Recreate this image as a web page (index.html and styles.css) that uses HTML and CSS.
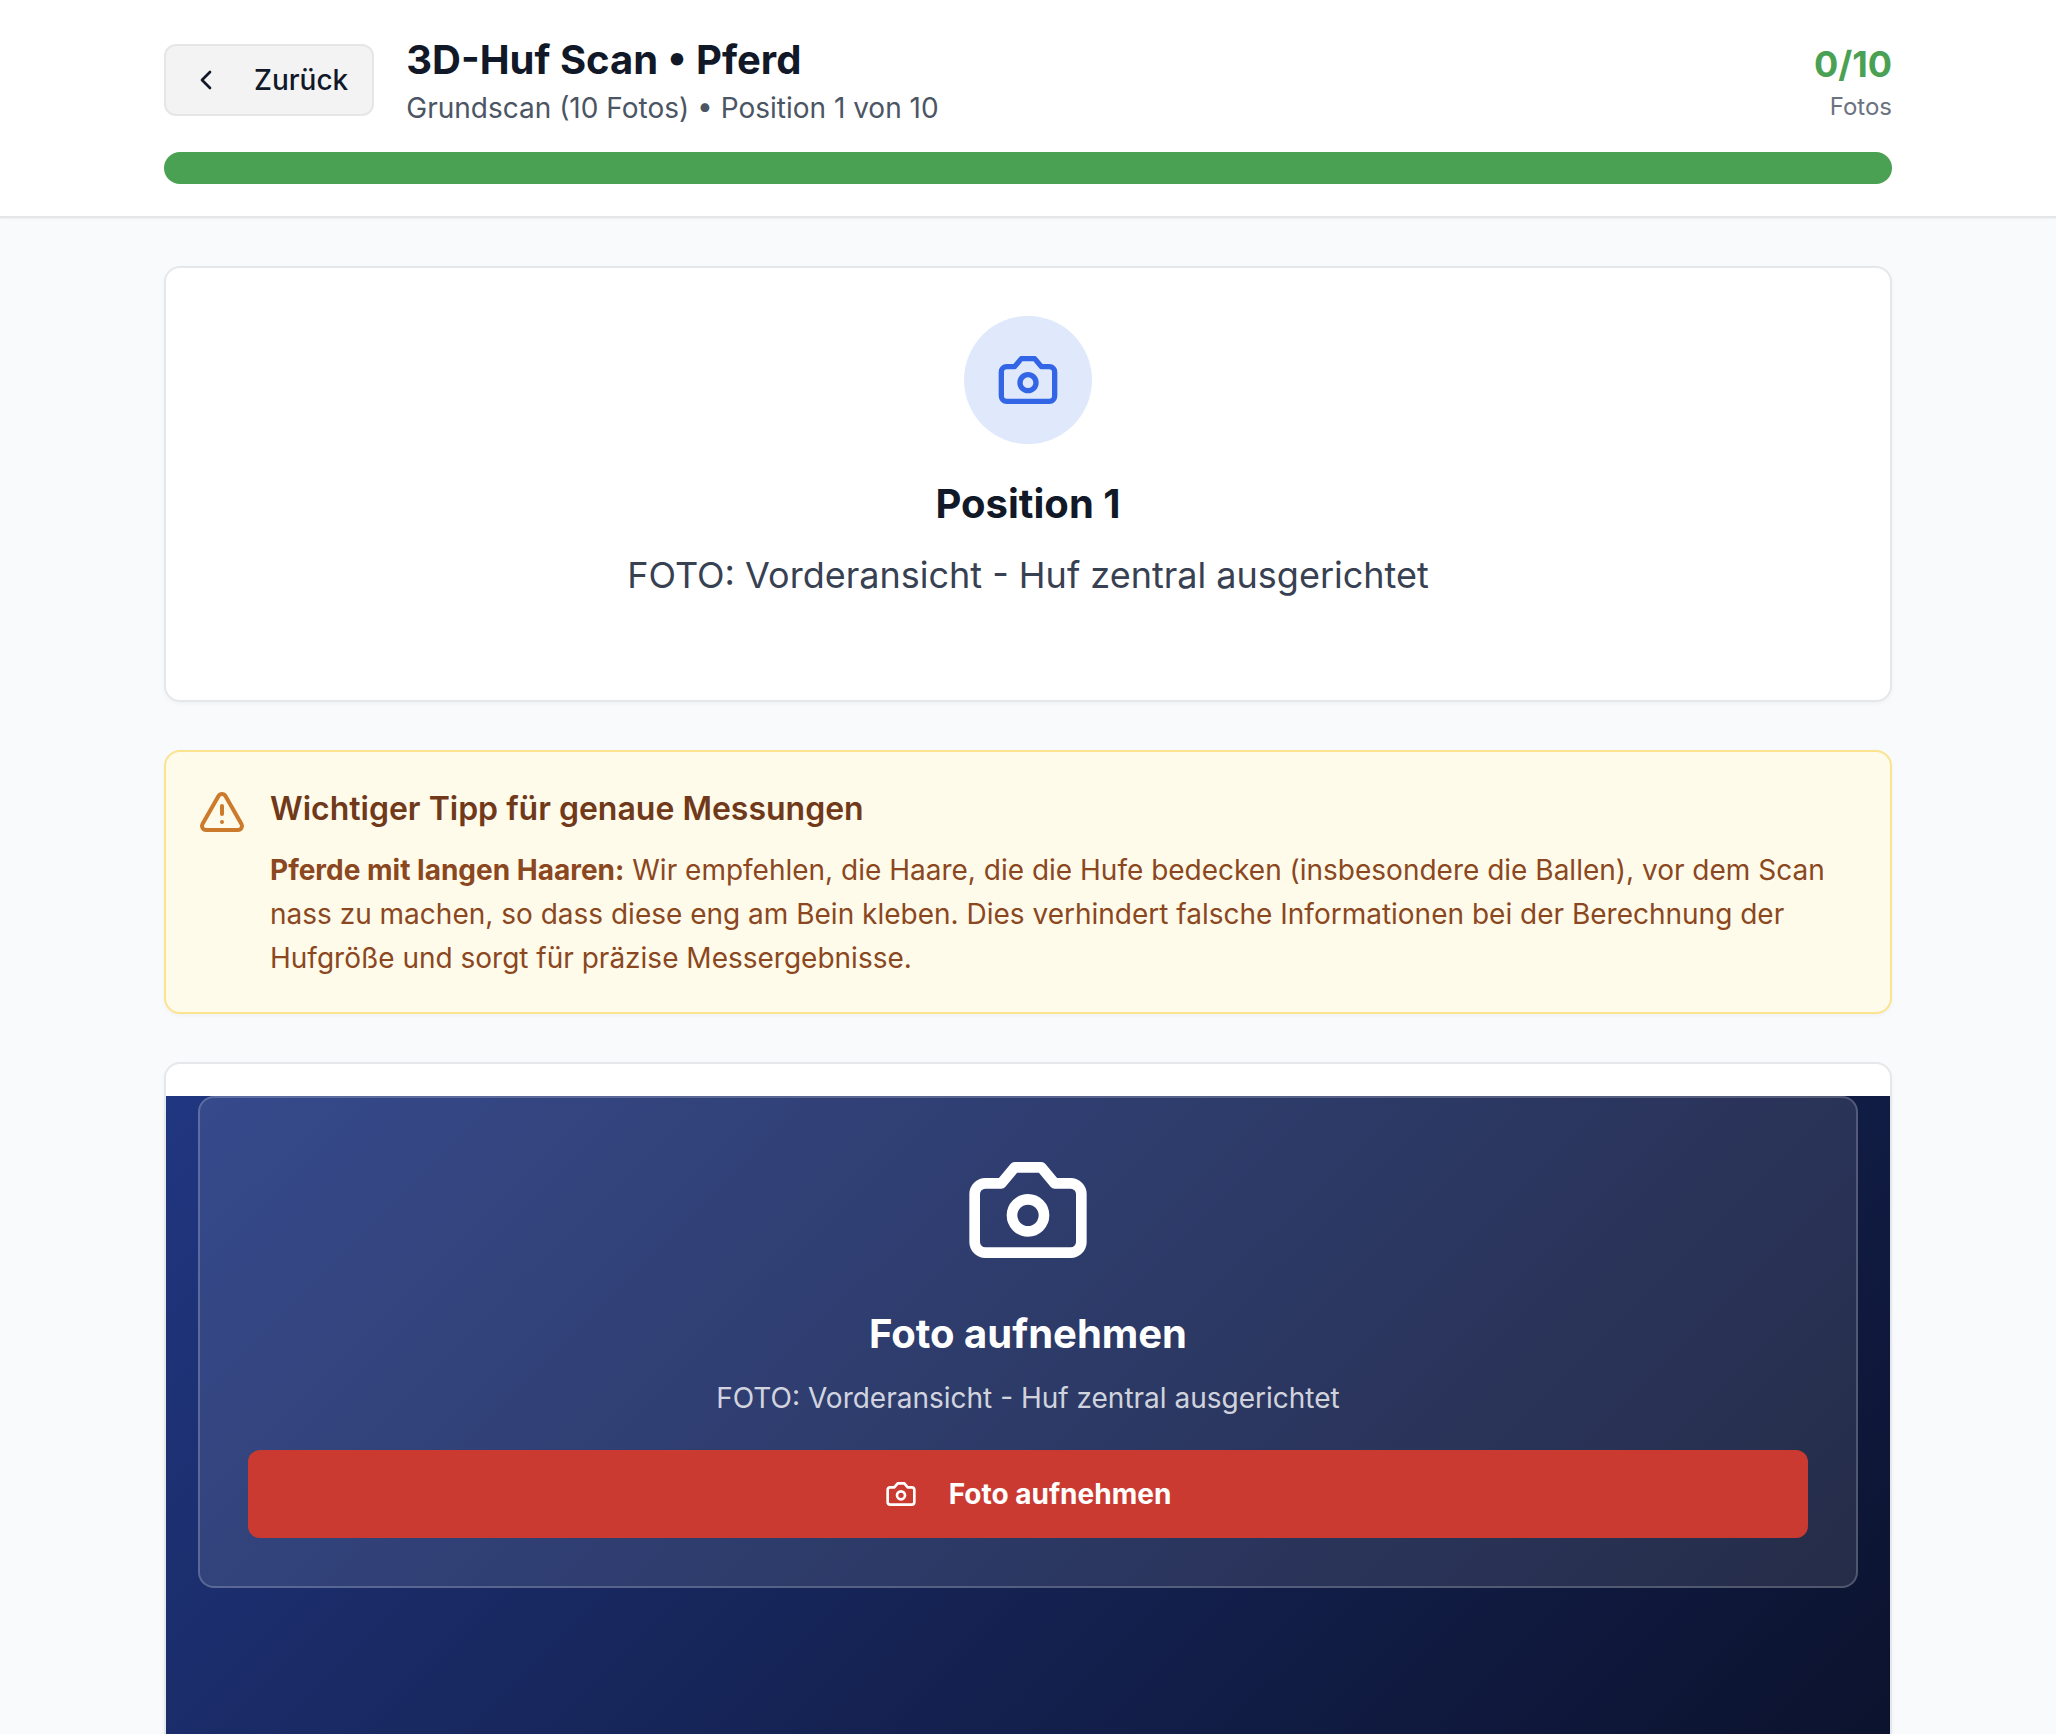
FILE: index.html
```html
<!DOCTYPE html>
<html lang="de">
<head>
    <meta charset="UTF-8">
    <meta name="viewport" content="width=device-width, initial-scale=1.0">
    <title>3D-Huf Scan</title>
    <link rel="stylesheet" href="styles.css">
</head>
<body>

<header class="topbar">
    <div class="container">
        <div class="topbar-row">
            <div class="topbar-left">
                <button class="back-btn">
                    <svg class="icon-back" viewBox="0 0 24 24"><path d="m15 18-6-6 6-6"/></svg>
                    <span>Zurück</span>
                </button>
                <div class="titles">
                    <h1>3D-Huf Scan • Pferd</h1>
                    <p>Grundscan (10 Fotos) • Position 1 von 10</p>
                </div>
            </div>
            <div class="counter">
                <div class="counter-value">0/10</div>
                <div class="counter-label">Fotos</div>
            </div>
        </div>
        <div class="progress"></div>
    </div>
</header>

<main class="container content">
    <section class="card position-card">
        <div class="position-icon">
            <svg class="icon-camera" viewBox="0 0 24 24"><path d="M14.5 4h-5L7 7H4a2 2 0 0 0-2 2v9a2 2 0 0 0 2 2h16a2 2 0 0 0 2-2V9a2 2 0 0 0-2-2h-3l-2.5-3z"/><circle cx="12" cy="13" r="3"/></svg>
        </div>
        <h2>Position 1</h2>
        <p>FOTO: Vorderansicht - Huf zentral ausgerichtet</p>
    </section>

    <section class="tip">
        <svg class="icon-warning" viewBox="0 0 24 24"><path d="m21.73 18-8-14a2 2 0 0 0-3.48 0l-8 14A2 2 0 0 0 4 21h16a2 2 0 0 0 1.73-3Z"/><path d="M12 9v4"/><path d="M12 17h.01"/></svg>
        <div>
            <h3>Wichtiger Tipp für genaue Messungen</h3>
            <p><strong>Pferde mit langen Haaren:</strong> Wir empfehlen, die Haare, die die Hufe bedecken (insbesondere die Ballen), vor dem Scan nass zu machen, so dass diese eng am Bein kleben. Dies verhindert falsche Informationen bei der Berechnung der Hufgröße und sorgt für präzise Messergebnisse.</p>
        </div>
    </section>

    <section class="card capture-card">
        <div class="capture-bg">
            <div class="capture-panel">
                <svg class="icon-capture" viewBox="0 0 24 24"><path d="M14.5 4h-5L7 7H4a2 2 0 0 0-2 2v9a2 2 0 0 0 2 2h16a2 2 0 0 0 2-2V9a2 2 0 0 0-2-2h-3l-2.5-3z"/><circle cx="12" cy="13" r="3"/></svg>
                <h3>Foto aufnehmen</h3>
                <p>FOTO: Vorderansicht - Huf zentral ausgerichtet</p>
                <button class="capture-btn">
                    <svg class="icon-btn" viewBox="0 0 24 24"><path d="M14.5 4h-5L7 7H4a2 2 0 0 0-2 2v9a2 2 0 0 0 2 2h16a2 2 0 0 0 2-2V9a2 2 0 0 0-2-2h-3l-2.5-3z"/><circle cx="12" cy="13" r="3"/></svg>
                    <span>Foto aufnehmen</span>
                </button>
            </div>
        </div>
    </section>
</main>

</body>
</html>
```

FILE: styles.css
```css
* {
    box-sizing: border-box;
}
html, body {
    height: 100%;
    overflow: hidden;
}
body {
    margin: 0;
    background-color: #f9fafb;
    font-family: Inter, "Liberation Sans", sans-serif;
    color: #111827;
}
h1, h2, h3, p {
    margin: 0;
}
svg {
    fill: none;
    stroke: currentColor;
    stroke-width: 2;
    stroke-linecap: round;
    stroke-linejoin: round;
    flex-shrink: 0;
    display: block;
}
.container {
    width: 1728px;
    margin: 0 auto;
}

/* top bar */
.topbar {
    background-color: #fff;
    border-bottom: 2px solid #e5e6e8;
    box-shadow: 0 1px 2px rgba(0, 0, 0, 0.05);
    padding: 32px 0;
}
.topbar-row {
    display: flex;
    justify-content: space-between;
    align-items: center;
    margin-bottom: 24px;
}
.topbar-left {
    display: flex;
    align-items: center;
    gap: 32px;
}
.back-btn {
    display: flex;
    align-items: center;
    gap: 32px;
    height: 72px;
    padding: 0 24px;
    background-color: #f3f3f4;
    border: 2px solid #e6e6e6;
    border-radius: 12px;
    font: 500 28px Inter, sans-serif;
    color: #111827;
}
.icon-back {
    width: 32px;
    height: 32px;
}
.titles h1 {
    font-size: 40px;
    line-height: 56px;
    font-weight: 700;
}
.titles p {
    font-size: 28px;
    line-height: 40px;
    color: #4b5563;
}
.counter {
    text-align: right;
}
.counter-value {
    font-size: 36px;
    line-height: 54px;
    font-weight: 700;
    color: #4aa154;
}
.counter-label {
    font-size: 24px;
    line-height: 32px;
    color: #6b7280;
}
.progress {
    height: 32px;
    border-radius: 16px;
    background-color: #4aa154;
}

/* cards */
.content {
    padding-top: 48px;
}
.card {
    background-color: #fff;
    border: 2px solid #e5e7eb;
    border-radius: 16px;
    box-shadow: 0 2px 4px rgba(0, 0, 0, 0.04);
}
.position-card {
    display: flex;
    flex-direction: column;
    align-items: center;
    height: 436px;
    padding-top: 48px;
}
.position-icon {
    display: flex;
    align-items: center;
    justify-content: center;
    width: 128px;
    height: 128px;
    border-radius: 50%;
    background-color: #dfe9fb;
    color: #3366e6;
}
.icon-camera {
    width: 64px;
    height: 64px;
}
.position-card h2 {
    margin-top: 32px;
    font-size: 40px;
    line-height: 56px;
    font-weight: 700;
}
.position-card p {
    margin-top: 16px;
    font-size: 36px;
    line-height: 54px;
    color: #374151;
}

/* warning */
.tip {
    display: flex;
    gap: 24px;
    margin-top: 48px;
    padding: 32px;
    background-color: #fffbeb;
    border: 2px solid #fce38f;
    border-radius: 16px;
    box-shadow: 0 2px 4px rgba(0, 0, 0, 0.04);
}
.icon-warning {
    width: 48px;
    height: 48px;
    margin-top: 4px;
    color: #cc7a2c;
}
.tip h3 {
    font-size: 32px;
    line-height: 50px;
    font-weight: 600;
    color: #70391a;
}
.tip p {
    margin-top: 14px;
    font-size: 28px;
    line-height: 44px;
    color: #8b4720;
}
.tip strong {
    font-weight: 700;
}

/* capture area */
.capture-card {
    margin-top: 48px;
    padding-top: 32px;
    overflow: hidden;
}
.capture-bg {
    height: 800px;
    padding: 0 32px;
    background: linear-gradient(135deg, #203680, #0a1028);
}
.capture-panel {
    display: flex;
    flex-direction: column;
    align-items: center;
    padding: 48px;
    background-color: rgba(255, 255, 255, 0.1);
    border: 2px solid rgba(255, 255, 255, 0.2);
    border-radius: 16px;
    color: #fff;
}
.icon-capture {
    width: 128px;
    height: 128px;
}
.capture-panel h3 {
    margin-top: 32px;
    font-size: 40px;
    line-height: 56px;
    font-weight: 700;
}
.capture-panel p {
    margin-top: 16px;
    font-size: 28px;
    line-height: 40px;
    color: rgba(255, 255, 255, 0.8);
}
.capture-btn {
    display: flex;
    align-items: center;
    justify-content: center;
    gap: 32px;
    width: 100%;
    height: 88px;
    margin-top: 32px;
    background-color: #cb3a31;
    border: none;
    border-radius: 12px;
    font: 700 28px Inter, sans-serif;
    color: #fff;
}
.icon-btn {
    width: 32px;
    height: 32px;
}
```
